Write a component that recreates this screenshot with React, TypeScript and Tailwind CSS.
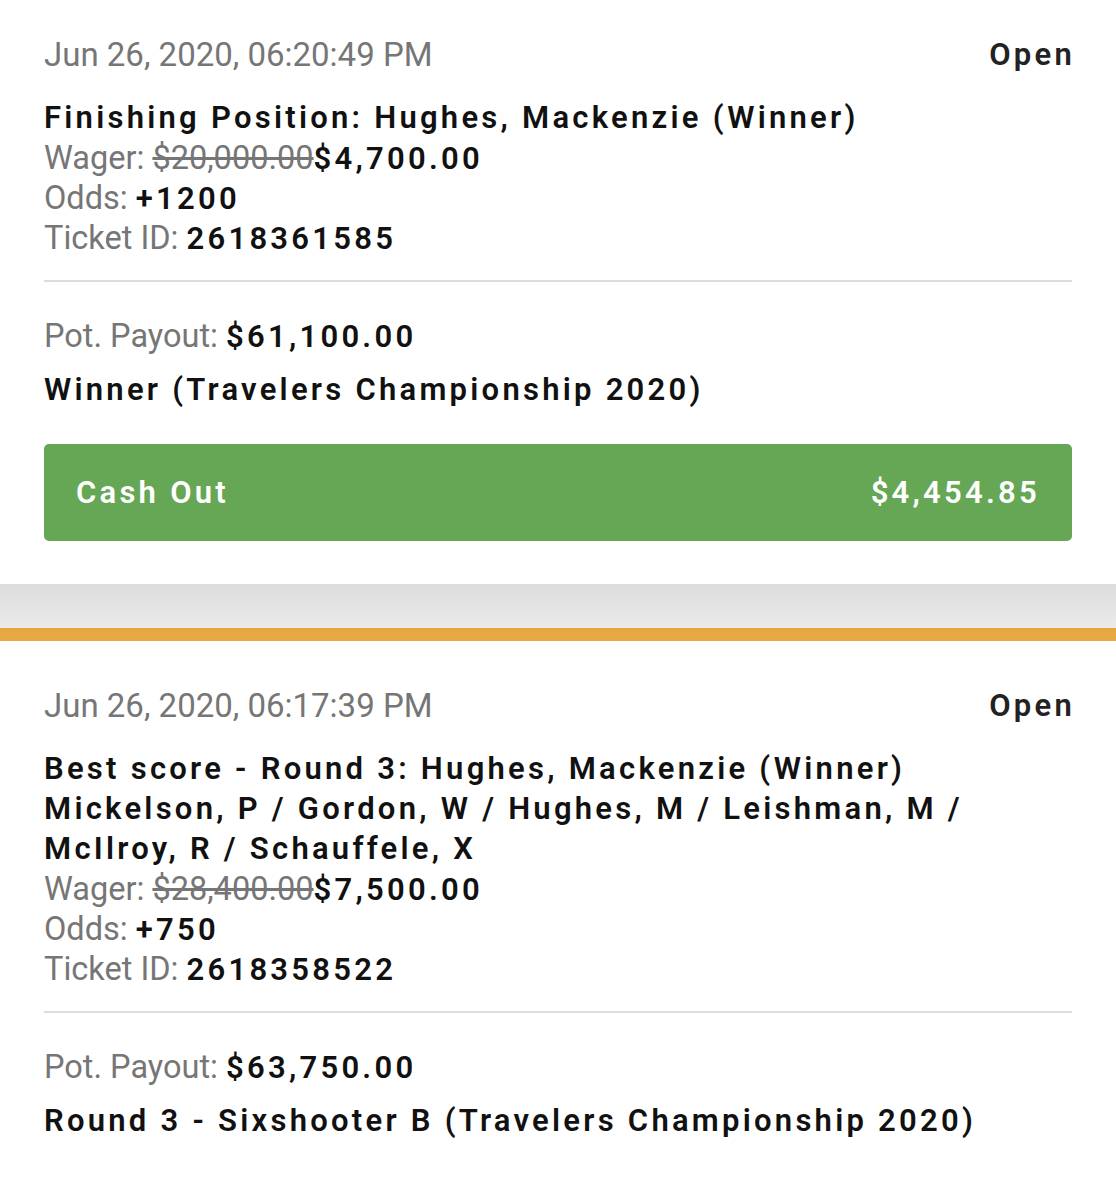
const label = 'text-[#767676] font-normal tracking-normal text-[32.5px] leading-none'
const value = 'text-[#111] font-semibold tracking-[0.105em] leading-none'

type Bet = {
  date: string
  title: string[]
  was: string
  wager: string
  odds: string
  ticket: string
  payout: string
  market: string
  cashOut?: string
}

const bets: Bet[] = [
  {
    date: 'Jun 26, 2020, 06:20:49 PM',
    title: ['Finishing Position: Hughes, Mackenzie (Winner)'],
    was: '$20,000.00',
    wager: '$4,700.00',
    odds: '+1200',
    ticket: '2618361585',
    payout: '$61,100.00',
    market: 'Winner (Travelers Championship 2020)',
    cashOut: '$4,454.85',
  },
  {
    date: 'Jun 26, 2020, 06:17:39 PM',
    title: [
      'Best score - Round 3: Hughes, Mackenzie (Winner)',
      'Mickelson, P / Gordon, W / Hughes, M / Leishman, M /',
      'McIlroy, R / Schauffele, X',
    ],
    was: '$28,400.00',
    wager: '$7,500.00',
    odds: '+750',
    ticket: '2618358522',
    payout: '$63,750.00',
    market: 'Round 3 - Sixshooter B (Travelers Championship 2020)',
  },
]

const BetCard = ({ bet, top }: { bet: Bet; top: string }) => (
  <div className={`bg-white px-[44px] ${top} pb-[43px]`}>
    <div className="flex items-center justify-between leading-[40px]">
      <span className="text-[33px] text-[#767676]">{bet.date}</span>
      <span className="mr-[-3px] text-[31px] font-semibold tracking-[0.105em] text-[#222]">Open</span>
    </div>

    <div className="mt-[23px] text-[31px] leading-[40px]">
      {bet.title.map((t) => (
        <div key={t} className="font-semibold tracking-[0.105em] text-[#111]">
          {t}
        </div>
      ))}
      <div className="pt-[1px]">
        <div>
          <span className={label}>Wager: </span>
          <span className={`${label} line-through`}>{bet.was}</span>
          <span className={value}>{bet.wager}</span>
        </div>
        <div>
          <span className={label}>Odds: </span>
          <span className={value}>{bet.odds}</span>
        </div>
        <div>
          <span className={label}>Ticket ID: </span>
          <span className={value}>{bet.ticket}</span>
        </div>
      </div>
    </div>

    <div className="mt-[21px] h-[2px] bg-[#dcdcdc]" />

    <div className="mt-[35px] text-[31px] leading-[40px]">
      <div>
        <span className={label}>Pot. Payout: </span>
        <span className={value}>{bet.payout}</span>
      </div>
      <div className="mt-[13px] font-semibold tracking-[0.105em] text-[#111]">{bet.market}</div>
    </div>

    {bet.cashOut && (
      <button
        type="button"
        className="mt-[34px] flex h-[97px] w-full items-center justify-between rounded-[5px] bg-[#66a755] pl-[32px] pr-[32px] pt-[2px] text-[31px] font-semibold tracking-[0.105em] text-white"
      >
        <span>Cash Out</span>
        <span>{bet.cashOut}</span>
      </button>
    )}
  </div>
)

export default function App() {
  return (
    <div className="min-h-[1200px] w-[1116px] bg-white" style={{ fontFamily: 'Roboto, "Noto Sans", sans-serif' }}>
      <BetCard bet={bets[0]} top="pt-[35px]" />
      <div className="h-[44px] bg-gradient-to-b from-[#dcdcdc] to-[#ebebeb]" />
      <div className="h-[13px] bg-[#e8a841]" />
      <BetCard bet={bets[1]} top="pt-[45px]" />
    </div>
  )
}
